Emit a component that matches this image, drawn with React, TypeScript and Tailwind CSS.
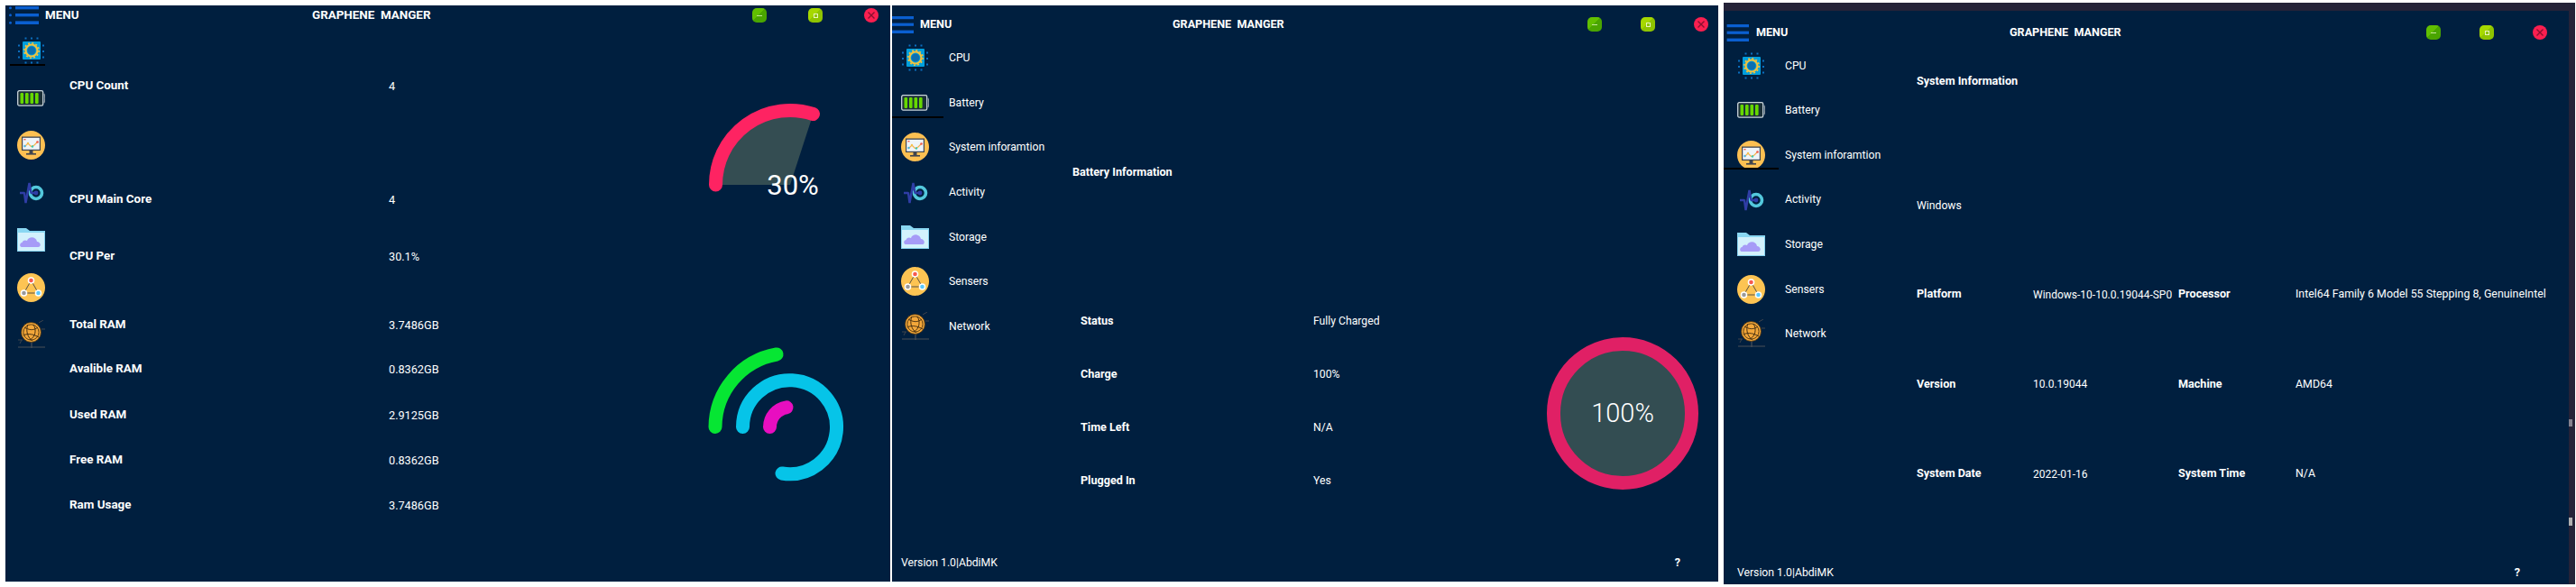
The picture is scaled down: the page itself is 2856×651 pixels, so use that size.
const FONT = "font-['Roboto','Liberation_Sans',sans-serif]";

function Hamburger({ className }: { className: string }) {
  return (
    <svg viewBox="0 0 33 20" className={className} preserveAspectRatio="none">
      <g fill="#0a5fd0">
        <rect x="7" y="0" width="26" height="3.4" />
        <rect x="7" y="8" width="26" height="3.4" />
        <rect x="7" y="16.4" width="26" height="3.6" />
        <circle cx="1.5" cy="1.7" r="1.5" />
        <circle cx="1.5" cy="9.7" r="1.5" />
        <circle cx="1.5" cy="18.2" r="1.5" />
      </g>
    </svg>
  );
}

function CpuIcon() {
  const dots = [9.5, 16, 22.5];
  return (
    <svg width="31" height="32" viewBox="0 0 31 32" className="shrink-0 block">
      <g fill="#0b6fc0">
        {dots.map((d) => (
          <g key={d}>
            <rect x={d - 1} y="1.5" width="2" height="2" />
            <rect x={d - 1} y="28.5" width="2" height="2" />
            <rect x="1" y={d} width="2" height="2" />
            <rect x="28" y={d} width="2" height="2" />
          </g>
        ))}
      </g>
      <rect x="6" y="6" width="20" height="20" rx="1" fill="#019fdd" />
      <circle cx="16" cy="16" r="6.5" fill="none" stroke="#f2c23e" strokeWidth="2.2" />
      <circle cx="16" cy="16" r="8.2" fill="none" stroke="#f2c23e" strokeWidth="1.6" strokeDasharray="2 2.3" />
      <circle cx="16" cy="16" r="4.5" fill="#0d6fb0" />
    </svg>
  );
}

function BatteryIcon() {
  return (
    <svg width="31" height="18" viewBox="0 0 31 18" className="shrink-0 block">
      <rect x="0.7" y="0.7" width="28" height="16.4" rx="1.6" fill="#1b2f38" stroke="#c9d5db" strokeWidth="1.3" />
      <path d="M29.8 4 C31 5 31 13 29.8 14" fill="none" stroke="#8f9aa2" strokeWidth="1.2" />
      <g fill="#66d800">
        <rect x="3.5" y="3" width="3.6" height="12" rx="1.2" />
        <rect x="9" y="3" width="3.6" height="12" rx="1.2" />
        <rect x="14.5" y="3" width="3.6" height="12" rx="1.2" />
        <rect x="20" y="3" width="3.6" height="12" rx="1.2" />
      </g>
    </svg>
  );
}

function SystemIcon() {
  return (
    <svg width="31" height="32" viewBox="0 0 31 32" className="shrink-0 block">
      <ellipse cx="15.5" cy="16" rx="15.5" ry="16" fill="#fdc052" />
      <rect x="5" y="6.5" width="21" height="15.5" fill="#40454f" />
      <rect x="6.2" y="7.8" width="18.6" height="13" fill="#eef4f9" />
      <path d="M8 18 L12 14 L15.5 17.5 L19 16 L23 12" fill="none" stroke="#f5b24a" strokeWidth="1.1" />
      <circle cx="8.5" cy="17" r="1.2" fill="#3fb6e8" />
      <circle cx="12" cy="14" r="1.2" fill="#f6c04a" />
      <circle cx="17" cy="17.5" r="1.2" fill="#3fc9b0" />
      <circle cx="22.5" cy="12.5" r="1.3" fill="#ef5a50" />
      <rect x="7.5" y="9" width="2" height="1.4" fill="#ef5a50" />
      <rect x="13.5" y="22" width="4" height="3" fill="#40454f" />
      <rect x="10" y="25" width="11" height="1.6" fill="#40454f" />
    </svg>
  );
}

function ActivityIcon() {
  return (
    <svg width="31" height="25" viewBox="0 0 31 25" className="shrink-0 block">
      <circle cx="21" cy="13" r="6.5" fill="none" stroke="#53c8dc" strokeWidth="3.6" />
      <path d="M3 13 L8 13 L9.5 24 L13.5 2 L15.5 13 L22 13" fill="none" stroke="#2f3da6" strokeWidth="2.4" strokeLinejoin="bevel" />
      <circle cx="21" cy="13" r="2.4" fill="#2f3da6" />
    </svg>
  );
}

function StorageIcon() {
  return (
    <svg width="31" height="26" viewBox="0 0 31 26" className="shrink-0 block">
      <path d="M0 0 H10 L14 3 H31 V8 H0 Z" fill="#8ad7f2" />
      <rect x="0" y="5" width="31" height="21" fill="#d3f1fc" />
      <rect x="0" y="5" width="1" height="21" fill="#86d2ef" />
      <rect x="30" y="5" width="1" height="21" fill="#86d2ef" />
      <rect x="0" y="25" width="31" height="1" fill="#86d2ef" />
      <path d="M5 21 C2.5 21 2.5 16.5 5.5 16 C6.5 13 9.5 13 11 14 C12.5 9 21 9 22 15 C26 15 27.5 21 23 21 Z" fill="#a69bf7" />
    </svg>
  );
}

function SensorIcon() {
  return (
    <svg width="31" height="32" viewBox="0 0 31 32" className="shrink-0 block">
      <ellipse cx="15.5" cy="16" rx="15.5" ry="16" fill="#fdc453" />
      <path d="M15.5 8 L7.5 22 H23.5 Z" fill="none" stroke="#5a5144" strokeWidth="1" />
      <circle cx="15.5" cy="8" r="3.8" fill="#fff" />
      <circle cx="15.5" cy="8" r="2.3" fill="#f65a50" />
      <circle cx="7.5" cy="22" r="3.8" fill="#fff" />
      <circle cx="7.5" cy="22" r="2.3" fill="#9a9a9a" />
      <circle cx="23.5" cy="22" r="3.8" fill="#fff" />
      <circle cx="23.5" cy="22" r="2.3" fill="#5cc8fb" />
    </svg>
  );
}

function NetworkIcon() {
  return (
    <svg width="31" height="32" viewBox="0 0 31 32" className="shrink-0 block">
      <path d="M1 30 H31 M16 24 V31" stroke="#4b5058" strokeWidth="1.2" />
      <path d="M1 22 H6 M24 3 L29 0 M27 10 H31 M3 26 L5 22" stroke="#3e444c" strokeWidth="1" />
      <circle cx="15.5" cy="13.5" r="11" fill="#f3a73a" stroke="#3d2c12" strokeWidth="0.8" />
      <circle cx="15.5" cy="13.5" r="8.6" fill="none" stroke="#5a3d12" strokeWidth="1" />
      <path d="M8 8 C13 11 18 12 23 8 M7 17 C12 14 19 16 24 19 M12 5 C9 12 12 20 17 23 M18 5 C22 11 20 19 14 22" fill="none" stroke="#4a3212" strokeWidth="1" />
    </svg>
  );
}

const ICONS = [CpuIcon, BatteryIcon, SystemIcon, ActivityIcon, StorageIcon, SensorIcon, NetworkIcon];
const NAV = ["CPU", "Battery", "System inforamtion", "Activity", "Storage", "Sensers", "Network"];

function WinBtn({ kind, size }: { kind: "min" | "max" | "close"; size: string }) {
  if (kind === "min")
    return (
      <div className={`${size} rounded-[5px] flex items-center justify-center bg-[linear-gradient(135deg,#62c000_45%,#4aa500_45%)]`}>
        <div className="w-[6px] h-[1px] bg-[#c6e89a]" />
      </div>
    );
  if (kind === "max")
    return (
      <div className={`${size} rounded-[5px] flex items-center justify-center bg-[linear-gradient(135deg,#a6d800_45%,#8fc400_45%)]`}>
        <div className="w-[5px] h-[5px] border border-[#e8f5c0]" />
      </div>
    );
  return (
    <div className={`${size} rounded-full flex items-center justify-center bg-[#fb1f50]`}>
      <svg width="8" height="8" viewBox="0 0 8 8">
        <path d="M0.5 0.5 L7.5 7.5 M7.5 0.5 L0.5 7.5" stroke="#8a1030" strokeWidth="1.4" />
      </svg>
    </div>
  );
}

function Buttons({ gap, size }: { gap: string; size: string }) {
  return (
    <div className={`flex ${gap}`}>
      <WinBtn kind="min" size={size} />
      <WinBtn kind="max" size={size} />
      <WinBtn kind="close" size={size} />
    </div>
  );
}

function NavList({ pad, active, underline }: { pad: string; active: number; underline: string }) {
  return (
    <div className={`flex flex-col ${pad}`}>
      {NAV.map((label, i) => {
        const Icon = ICONS[i];
        return (
          <div key={label} className="relative flex items-center h-[49.6px]">
            <div className="w-[31px] flex justify-center shrink-0">
              <Icon />
            </div>
            <span className="ml-[22px] text-[12.2px] text-white whitespace-nowrap">{label}</span>
            {i === active ? <div className={underline} /> : null}
          </div>
        );
      })}
    </div>
  );
}

function Footer({ className }: { className: string }) {
  return (
    <div className={`flex justify-between items-center h-[16px] text-white ${className}`}>
      <span className="text-[12.2px]">Version 1.0|AbdiMK</span>
      <span className="text-[12.6px] font-bold">?</span>
    </div>
  );
}

const CPU_ROWS = [
  { label: "CPU Count", value: "4", mt: "mt-[59.5px]" },
  { label: "CPU Main Core", value: "4", mt: "mt-[110px]" },
  { label: "CPU Per", value: "30.1%", mt: "mt-[47px]" },
  { label: "Total RAM", value: "3.7486GB", mt: "mt-[60px]" },
  { label: "Avalible RAM", value: "0.8362GB", mt: "mt-[33px]" },
  { label: "Used RAM", value: "2.9125GB", mt: "mt-[35px]" },
  { label: "Free RAM", value: "0.8362GB", mt: "mt-[34px]" },
  { label: "Ram Usage", value: "3.7486GB", mt: "mt-[34px]" },
];

function CpuGauge() {
  return (
    <svg width="135" height="115" viewBox="0 0 135 115" className="block">
      <path d="M96 95 L13.5 95 A82.5 82.5 0 0 1 121.5 16.5 Z" fill="#344d52" />
      <path d="M13.5 95 A82.5 82.5 0 0 1 121.5 16.5" fill="none" stroke="#fe2362" strokeWidth="15" strokeLinecap="round" />
      <text x="99" y="106" textAnchor="middle" fontFamily="Roboto" fontSize="31" fill="#ffffff">30%</text>
    </svg>
  );
}

function RamGauge() {
  return (
    <svg width="160" height="160" viewBox="0 0 160 160" className="block">
      <path d="M13 93.5 A82.5 82.5 0 0 1 81 13" fill="none" stroke="#06e633" strokeWidth="15" strokeLinecap="round" />
      <path d="M43.5 93.5 A52 52 0 1 1 87 145" fill="none" stroke="#06c4e8" strokeWidth="15" strokeLinecap="round" />
      <path d="M73.5 93.5 A22 22 0 0 1 92 71.8" fill="none" stroke="#e80ec0" strokeWidth="15" strokeLinecap="round" />
    </svg>
  );
}

function CpuPanel() {
  return (
    <div className="w-[981px] h-[639px] mt-[6px] bg-[#001f3f] flex flex-col overflow-hidden shrink-0">
      <div className="flex items-center h-[22px] shrink-0 text-white font-bold text-[13.4px]">
        <Hamburger className="w-[33px] h-[20px] ml-[4px] shrink-0" />
        <span className="ml-[7px] w-[296px]">MENU</span>
        <span className="w-[488px] whitespace-pre">GRAPHENE  MANGER</span>
        <Buttons gap="gap-[46px]" size="w-[16px] h-[16px]" />
      </div>
      <div className="flex flex-1">
        <div className="w-[71px] pl-[13px] pt-[2px] shrink-0 flex flex-col">
          {ICONS.map((Icon, i) => (
            <div key={i} className="relative h-[52.5px] flex items-center">
              <Icon />
              {i === 0 ? <div className="absolute left-[-8px] top-[41px] w-[39px] h-[2px] bg-black" /> : null}
            </div>
          ))}
        </div>
        <div className="w-[703px] shrink-0 flex flex-col text-white text-[13.4px]">
          {CPU_ROWS.map((r) => (
            <div key={r.label} className={`flex items-center h-[16px] ${r.mt}`}>
              <span className="w-[354px] font-bold">{r.label}</span>
              <span className="text-[12.7px]">{r.value}</span>
            </div>
          ))}
        </div>
        <div className="flex flex-col pt-[82px]">
          <CpuGauge />
          <div className="mt-[155px]">
            <RamGauge />
          </div>
        </div>
      </div>
    </div>
  );
}

const BATTERY_ROWS = [
  ["Status", "Fully Charged"],
  ["Charge", "100%"],
  ["Time Left", "N/A"],
  ["Plugged In", "Yes"],
];

function BatteryPanel() {
  return (
    <div className="w-[916px] h-[639px] mt-[6px] ml-[2px] bg-[#001f3f] flex flex-col overflow-hidden shrink-0">
      <div className="flex items-center h-[33px] pt-[9px] shrink-0 text-white font-bold text-[12.6px]">
        <Hamburger className="w-[31px] h-[19px] ml-[-7px] shrink-0" />
        <span className="ml-[7px] w-[280px]">MENU</span>
        <span className="w-[460px] whitespace-pre">GRAPHENE  MANGER</span>
        <Buttons gap="gap-[43px]" size="w-[16px] h-[16px]" />
      </div>
      <div className="flex flex-1">
        <div className="w-[200px] shrink-0">
          <NavList pad="pl-[10px] pt-[0.5px]" active={1} underline="absolute left-[-10px] top-[40px] w-[57px] h-[2px] bg-black" />
        </div>
        <div className="flex flex-col text-white text-[12.6px]">
          <div className="font-bold h-[16px] mt-[144px] flex items-center">Battery Information</div>
          <div className="flex pl-[9px] mt-[128px]">
            <div className="w-[517px] flex flex-col">
              {BATTERY_ROWS.map(([label, value]) => (
                <div key={label} className="flex items-center h-[59px]">
                  <span className="w-[258px] font-bold">{label}</span>
                  <span className="text-[12.2px]">{value}</span>
                </div>
              ))}
            </div>
            <div className="mt-[47px] w-[168px] h-[169px] rounded-full border-[15px] border-[#e02065] bg-[#334d52] flex items-center justify-center text-[29px] font-light">
              100%
            </div>
          </div>
        </div>
      </div>
      <Footer className="pl-[10px] pr-[42px] mb-[13px]" />
    </div>
  );
}

const SYSTEM_ROWS = [
  ["Platform", "Windows-10-10.0.19044-SP0", "Processor", "Intel64 Family 6 Model 55 Stepping 8, GenuineIntel"],
  ["Version", "10.0.19044", "Machine", "AMD64"],
  ["System Date", "2022-01-16", "System Time", "N/A"],
];

function SystemPanel() {
  return (
    <div className="w-[944px] h-[645px] mt-[3px] ml-[6px] bg-[#252338] pt-[9px] flex shrink-0 overflow-hidden">
      <div className="w-[937px] h-[636px] bg-[#001f3f] flex flex-col overflow-hidden shrink-0">
        <div className="flex items-center h-[36px] pt-[12px] shrink-0 text-white font-bold text-[12.6px]">
          <Hamburger className="w-[31px] h-[19px] ml-[-3px] shrink-0" />
          <span className="ml-[8px] w-[281px]">MENU</span>
          <span className="w-[462px] whitespace-pre">GRAPHENE  MANGER</span>
          <Buttons gap="gap-[43px]" size="w-[16px] h-[16px]" />
        </div>
        <div className="flex flex-1">
          <div className="w-[214px] shrink-0">
            <NavList pad="pl-[15px]" active={2} underline="absolute left-[-15px] top-[39px] w-[61px] h-[2px] bg-black" />
          </div>
          <div className="flex flex-col text-white text-[12.6px]">
            <div className="font-bold h-[16px] mt-[34px] flex items-center">System Information</div>
            <div className="h-[16px] mt-[122px] flex items-center text-[12.2px]">Windows</div>
            <div className="mt-[41px] flex flex-col">
              {SYSTEM_ROWS.map(([a, b, c, d]) => (
                <div key={a} className="grid grid-cols-[129px_161px_130px_auto] items-center h-[99.5px]">
                  <span className="font-bold">{a}</span>
                  <span className="text-[12px] whitespace-nowrap">{b}</span>
                  <span className="font-bold">{c}</span>
                  <span className="text-[12.4px] whitespace-nowrap">{d}</span>
                </div>
              ))}
            </div>
          </div>
        </div>
        <Footer className="pl-[15px] pr-[54px] mb-[5px]" />
      </div>
      <div className="flex flex-col pt-[453px]">
        <div className="w-[4px] h-[8px] bg-[#85828f]" />
        <div className="w-[4px] h-[9px] mt-[101px] bg-[#b0b0b0]" />
      </div>
    </div>
  );
}

export default function App() {
  return (
    <div className={`w-[2856px] h-[651px] bg-white flex pl-[6px] overflow-hidden ${FONT}`}>
      <CpuPanel />
      <BatteryPanel />
      <SystemPanel />
    </div>
  );
}
